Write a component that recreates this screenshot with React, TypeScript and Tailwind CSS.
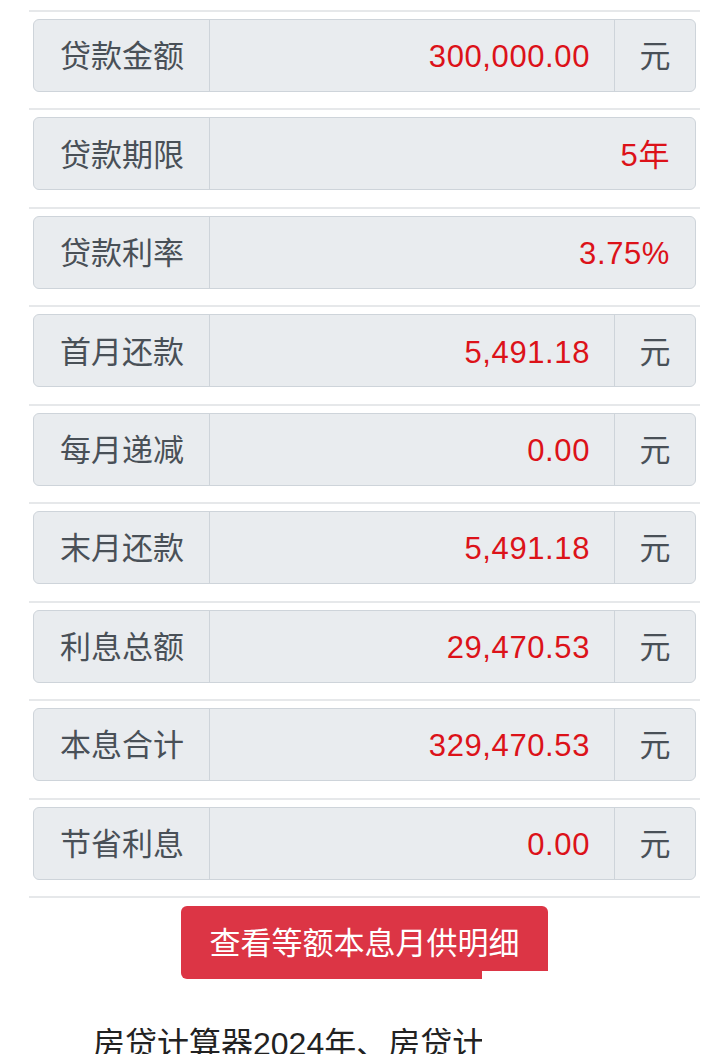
import React from "react";

type Row = { label: string; value: string; unit?: string };

const rows: Row[] = [
  { label: "贷款金额", value: "300,000.00", unit: "元" },
  { label: "贷款期限", value: "5年" },
  { label: "贷款利率", value: "3.75%" },
  { label: "首月还款", value: "5,491.18", unit: "元" },
  { label: "每月递减", value: "0.00", unit: "元" },
  { label: "末月还款", value: "5,491.18", unit: "元" },
  { label: "利息总额", value: "29,470.53", unit: "元" },
  { label: "本息合计", value: "329,470.53", unit: "元" },
  { label: "节省利息", value: "0.00", unit: "元" },
];

export default function App() {
  return (
    <div
      className="relative w-[720px] h-[1054px] overflow-hidden bg-white"
      style={{ fontFamily: '"Liberation Sans", "Noto Sans CJK SC", sans-serif' }}
    >
      <div className="ml-[29px] w-[671px] pt-[10px]">
        {rows.map((r) => (
          <div key={r.label} className="h-[98.44px]">
            <div className="h-[2px] bg-[#e6e8ea]" />
            <div className="mt-[7px] ml-[4px] mr-[4px] h-[73px] flex rounded-[6px] border border-[#ced4da] bg-[#e9ecef] overflow-hidden">
              <div className="w-[176px] shrink-0 flex items-center pt-[4px] pl-[26px] text-[31px] text-[#495057] border-r border-[#ced4da]">
                {r.label}
              </div>
              <div
                className={`flex-1 flex items-center justify-end pt-[4px] text-[31px] tracking-[0.6px] text-[#dc1219] ${
                  r.unit ? "pr-[24px]" : "pr-[25px]"
                }`}
              >
                {r.value}
              </div>
              {r.unit && (
                <div className="w-[81px] shrink-0 flex items-center justify-center pt-[4px] text-[31px] text-[#495057] border-l border-[#ced4da]">
                  {r.unit}
                </div>
              )}
            </div>
          </div>
        ))}
        <div className="h-[2px] bg-[#e6e8ea]" />
        <div className="flex justify-center mt-[8px]">
          <div className="w-[367px] h-[73px] pt-[3px] rounded-[6px] bg-[#dc3545] text-white text-[31px] flex items-center justify-center">
            查看等额本息月供明细
          </div>
        </div>
        <p className="mt-[41px] text-[32px] leading-[48px] text-[#222222] indent-[2em] whitespace-nowrap">
          房贷计算器2024年、房贷计算器最新版
        </p>
      </div>
      <div className="absolute left-[482px] top-[971px] w-[260px] h-[120px] bg-white" />
    </div>
  );
}
